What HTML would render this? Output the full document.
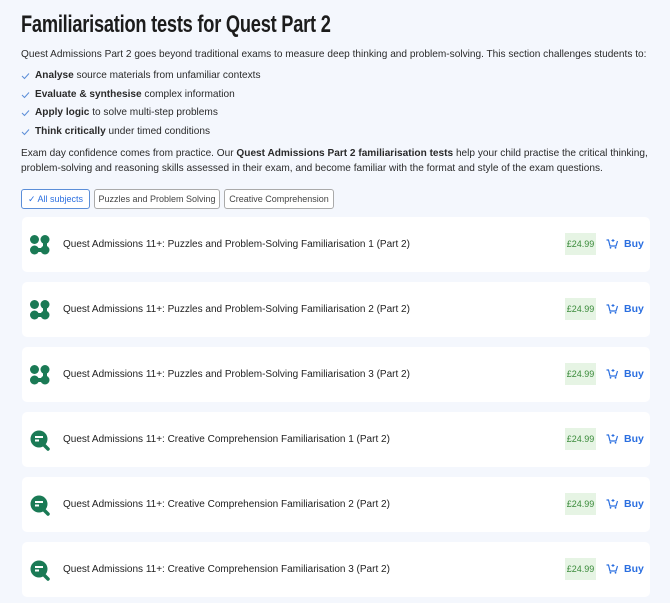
<!DOCTYPE html>
<html><head><meta charset="utf-8"><style>
*{box-sizing:border-box;margin:0;padding:0}
body{width:670px;height:603px;overflow:hidden;background:#f4f7fd;font-family:"Liberation Sans",sans-serif;color:#222;}
h1{position:absolute;left:21px;top:11px;font-size:24px;font-weight:bold;letter-spacing:-0.3px;transform:scaleX(0.76);transform-origin:left;color:#1c1c1c;white-space:nowrap}
.p{position:absolute;left:21px;font-size:10.1px;line-height:15px;color:#2a2a2a;white-space:nowrap}
.li{position:absolute;left:21px;font-size:10.1px;color:#2a2a2a;white-space:nowrap}
.li svg{position:absolute;left:0;top:2px}
.li span{margin-left:14px}
.tag{position:absolute;top:189px;height:20px;border:1px solid #aaa;border-radius:3px;font-size:9px;line-height:18px;color:#444;background:#fff;text-align:center;white-space:nowrap}
.card{position:absolute;left:22px;width:628px;height:55px;background:#fff;border-radius:5px}
.card .t{position:absolute;left:41px;top:22px;font-size:10px;color:#222;white-space:nowrap}
.card .ic{position:absolute;left:7px;top:17px}
.price{position:absolute;left:543px;top:16px;width:31px;height:22px;background:#e6f4e4;color:#3a8a3a;font-size:9px;line-height:22px;text-align:center}
.cart{position:absolute;left:584px;top:21px}
.buy{position:absolute;left:602px;top:21px;color:#2b6fe0;font-weight:bold;font-size:10.5px}
</style></head><body>
<h1>Familiarisation tests for Quest Part 2</h1>
<div class="p" style="top:47px">Quest Admissions Part 2 goes beyond traditional exams to measure deep thinking and problem-solving. This section challenges students to:</div>
<div class="li" style="top:70px"><svg width="9" height="8"><path d="M1 4l2.5 2.5L8 1.5" stroke="#5b8ed8" fill="none" stroke-width="1"/></svg><span><b>Analyse</b> source materials from unfamiliar contexts</span></div>
<div class="li" style="top:89px"><svg width="9" height="8"><path d="M1 4l2.5 2.5L8 1.5" stroke="#5b8ed8" fill="none" stroke-width="1"/></svg><span><b>Evaluate &amp; synthesise</b> complex information</span></div>
<div class="li" style="top:107px"><svg width="9" height="8"><path d="M1 4l2.5 2.5L8 1.5" stroke="#5b8ed8" fill="none" stroke-width="1"/></svg><span><b>Apply logic</b> to solve multi-step problems</span></div>
<div class="li" style="top:126px"><svg width="9" height="8"><path d="M1 4l2.5 2.5L8 1.5" stroke="#5b8ed8" fill="none" stroke-width="1"/></svg><span><b>Think critically</b> under timed conditions</span></div>
<div class="p" style="top:146px">Exam day confidence comes from practice. Our <b>Quest Admissions Part 2 familiarisation tests</b> help your child practise the critical thinking,<br>problem-solving and reasoning skills assessed in their exam, and become familiar with the format and style of the exam questions.</div>
<div class="tag" style="left:21px;width:69px;border-color:#5b8ed8;color:#2b6fe0">✓ All subjects</div>
<div class="tag" style="left:94px;width:126px">Puzzles and Problem Solving</div>
<div class="tag" style="left:224px;width:110px">Creative Comprehension</div>

<div id="cards"></div>
<script>
var titles=["Puzzles and Problem-Solving Familiarisation 1 (Part 2)","Puzzles and Problem-Solving Familiarisation 2 (Part 2)","Puzzles and Problem-Solving Familiarisation 3 (Part 2)","Creative Comprehension Familiarisation 1 (Part 2)","Creative Comprehension Familiarisation 2 (Part 2)","Creative Comprehension Familiarisation 3 (Part 2)"];
var puz='<svg class="ic" width="22" height="22" viewBox="0 0 22 22"><g fill="#1a7a55"><circle cx="5.5" cy="5.5" r="4.5"/><circle cx="16" cy="5.5" r="4.5"/><circle cx="5.5" cy="16" r="4.5"/><circle cx="16" cy="16" r="4.5"/><rect x="5.5" y="14" width="10.5" height="4"/><rect x="14" y="5.5" width="4" height="10.5"/></g></svg>';
var com='<svg class="ic" width="22" height="22" viewBox="0 0 22 22"><circle cx="10" cy="10" r="8.5" fill="#1a7a55"/><path d="M14 15l5 5" stroke="#1a7a55" stroke-width="3.5" stroke-linecap="round"/><path d="M6 8h8M6 11.5h4" stroke="#fff" stroke-width="2"/></svg>';
var cart='<svg class="cart" width="12" height="11" viewBox="0 0 12 11"><path d="M0.5 2h2l1.5 6h6l1.5-5" stroke="#2b6fe0" fill="none" stroke-width="1.2"/><path d="M7 1v3M5.5 2.5h3" stroke="#2b6fe0" stroke-width="1"/><circle cx="4.5" cy="9.8" r="0.9" fill="#2b6fe0"/><circle cx="9.5" cy="9.8" r="0.9" fill="#2b6fe0"/></svg>';
var h='';
for(var i=0;i<6;i++){h+='<div class="card" style="top:'+(217+i*65)+'px">'+(i<3?puz:com)+'<div class="t">Quest Admissions 11+: '+titles[i]+'</div><div class="price">£24.99</div>'+cart+'<div class="buy">Buy</div></div>';}
document.getElementById('cards').innerHTML=h;
</script>
</body></html>
